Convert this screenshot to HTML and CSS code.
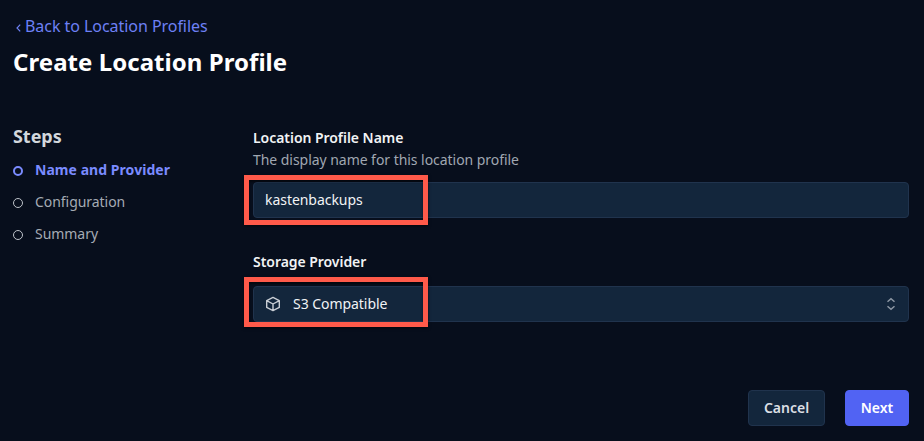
FILE: index.html
```html
<!DOCTYPE html>
<html lang="en">
<head>
<meta charset="utf-8">
<title>Create Location Profile</title>
<link rel="stylesheet" href="styles.css">
</head>
<body>
<header class="header">
  <a class="back" href="#"><svg class="back-icon" viewBox="0 0 5 8"><path d="M4.2 .6 1 4l3.2 3.4"/></svg><span>Back to Location Profiles</span></a>
  <h1 class="title">Create Location Profile</h1>
</header>
<main class="layout">
  <nav class="steps">
    <h2 class="steps-title">Steps</h2>
    <ol class="step-list">
      <li class="step active"><i class="dot"></i><span>Name and Provider</span></li>
      <li class="step"><i class="dot"></i><span>Configuration</span></li>
      <li class="step"><i class="dot"></i><span>Summary</span></li>
    </ol>
  </nav>
  <form class="form">
    <label class="label">Location Profile Name</label>
    <p class="hint">The display name for this location profile</p>
    <div class="field"><span>kastenbackups</span><div class="highlight"></div></div>
    <label class="label provider">Storage Provider</label>
    <div class="field select">
      <svg class="cube" viewBox="0 0 16 16"><path d="M8 1.4 14.3 4.6V11.4L8 14.6 1.7 11.4V4.6ZM1.7 4.6 8 8 14.3 4.6M8 8V14.6"/></svg>
      <span>S3 Compatible</span>
      <svg class="chevrons" viewBox="0 0 10 14"><path d="M1.5 4.7 5 1.7 8.5 4.7M1.5 9.3 5 12.3 8.5 9.3"/></svg>
      <div class="highlight"></div>
    </div>
  </form>
</main>
<footer class="actions">
  <button class="button cancel">Cancel</button>
  <button class="button next">Next</button>
</footer>
</body>
</html>
```
FILE: styles.css
```css
* { box-sizing: border-box; }
body {
  margin: 0;
  height: 441px;
  padding: 14px 15px 0 13px;
  overflow: hidden;
  background: #070e1c;
  color: #f1f3f5;
  font: 14px/20px "Noto Sans", "Open Sans", sans-serif;
  letter-spacing: -0.045px;
}
h1, h2, p, ol { margin: 0; padding: 0; }
.back {
  display: flex;
  align-items: center;
  height: 24px;
  padding-left: 3px;
  color: #6d80f5;
  font-size: 16px;
  line-height: 24px;
  letter-spacing: -0.05px;
  text-decoration: none;
}
.back-icon { width: 5px; height: 8px; margin: 3px 4px 0 0; stroke-width: 1.2; }
svg { flex: none; fill: none; stroke: currentColor; }
.title { margin-top: 8px; color: #fff; font-size: 24px; line-height: 32px; font-weight: 700; letter-spacing: 0.05px; }
.layout { display: flex; margin-top: 46px; }
.steps { width: 240px; margin-top: -1px; }
.steps-title { color: #d2d7dc; font-size: 18px; line-height: 26px; font-weight: 700; }
.step-list { margin-top: 5px; list-style: none; }
.step { display: flex; align-items: center; gap: 12px; height: 32px; color: #a5abb4; }
.dot { width: 10px; height: 10px; margin-top: 2px; border: 1.5px solid #bdc2c9; border-radius: 50%; }
.active { color: #7a8bff; font-weight: 700; letter-spacing: 0.05px; }
.active .dot { border: 2px solid #7a8bff; }
.form { flex: 1; padding-top: 4px; }
.label { display: block; font-weight: 600; }
.hint { margin: 2px 0 12px; color: #a0a7b1; }
.field {
  position: relative;
  display: flex;
  align-items: center;
  height: 36px;
  padding: 0 11px;
  border: 1px solid #20334d;
  border-radius: 4px;
  background: #13263c;
}
.provider { margin: 34px 0 14px; }
.cube { width: 16px; height: 16px; margin-right: 12px; color: #c9ced5; stroke-width: 1.4; stroke-linejoin: round; }
.chevrons { width: 10px; height: 14px; margin-left: auto; margin-right: 1px; color: #8d97a4; stroke-width: 1.5; }
.highlight {
  position: absolute;
  left: -10px;
  top: -8px;
  width: 184px;
  height: 50px;
  border: 5px solid #ff5a4a;
  box-shadow: 0 1px 3px rgba(0,0,0,.6), inset 0 2px 2px rgba(0,0,0,.5);
}
.select .highlight { top: -10px; }
.actions { display: flex; justify-content: flex-end; gap: 20px; margin-top: 68px; }
.button { height: 36px; border: 1px solid #20334d; border-radius: 4px; font: inherit; font-weight: 600; }
.cancel { width: 77px; background: #13263c; color: #dbdfe4; }
.next { width: 64px; border-color: #5163f3; background: #5163f3; color: #fff; }
```
